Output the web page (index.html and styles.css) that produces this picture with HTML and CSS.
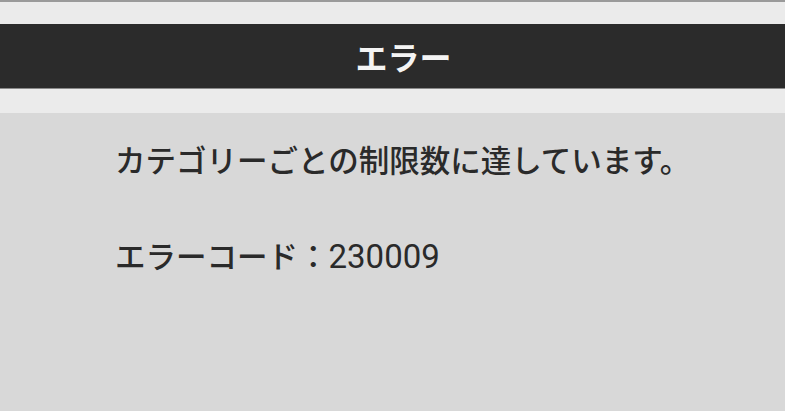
FILE: index.html
```html
<!DOCTYPE html>
<html lang="ja">
<head>
<meta charset="utf-8">
<link rel="stylesheet" href="styles.css">
</head>
<body>
<div class="screen">
  <div class="topline"></div>
  <div class="gap-top"></div>
  <header class="titlebar"><h1 class="title">エラー</h1></header>
  <div class="gap-bottom"></div>
  <main class="content">
    <p class="msg">カテゴリーごとの制限数に達しています。</p>
    <p class="msg code">エラーコード：<span class="num">230009</span></p>
  </main>
</div>
</body>
</html>
```
FILE: styles.css
```css
html, body {
  margin: 0;
  padding: 0;
  width: 785px;
  height: 411px;
  overflow: hidden;
  background: #d8d8d8;
}
.screen {
  display: flex;
  flex-direction: column;
  height: 411px;
  font-family: Roboto, "Noto Sans CJK JP", sans-serif;
}
.topline {
  height: 2px;
  background: #9a9a9a;
}
.gap-top {
  height: 22px;
  background: #ebebeb;
}
.titlebar {
  height: 64px;
  background: #2b2b2b;
  border-bottom: 1px solid #8a8a8a;
  display: flex;
  align-items: center;
  justify-content: center;
  padding-left: 22px;
}
.title {
  margin: 0;
  color: #f4f4f4;
  font-size: 32px;
  font-weight: 700;
}
.gap-bottom {
  height: 24px;
  background: #ebebeb;
}
.content {
  flex: 1;
  padding: 26px 0 0 115px;
  color: #2a2a2a;
}
.msg {
  margin: 0;
  font-size: 30.5px;
  font-weight: 500;
  line-height: 46px;
}
.code {
  margin-top: 49px;
}
.num {
  font-size: 33px;
  font-weight: 400;
}
```
